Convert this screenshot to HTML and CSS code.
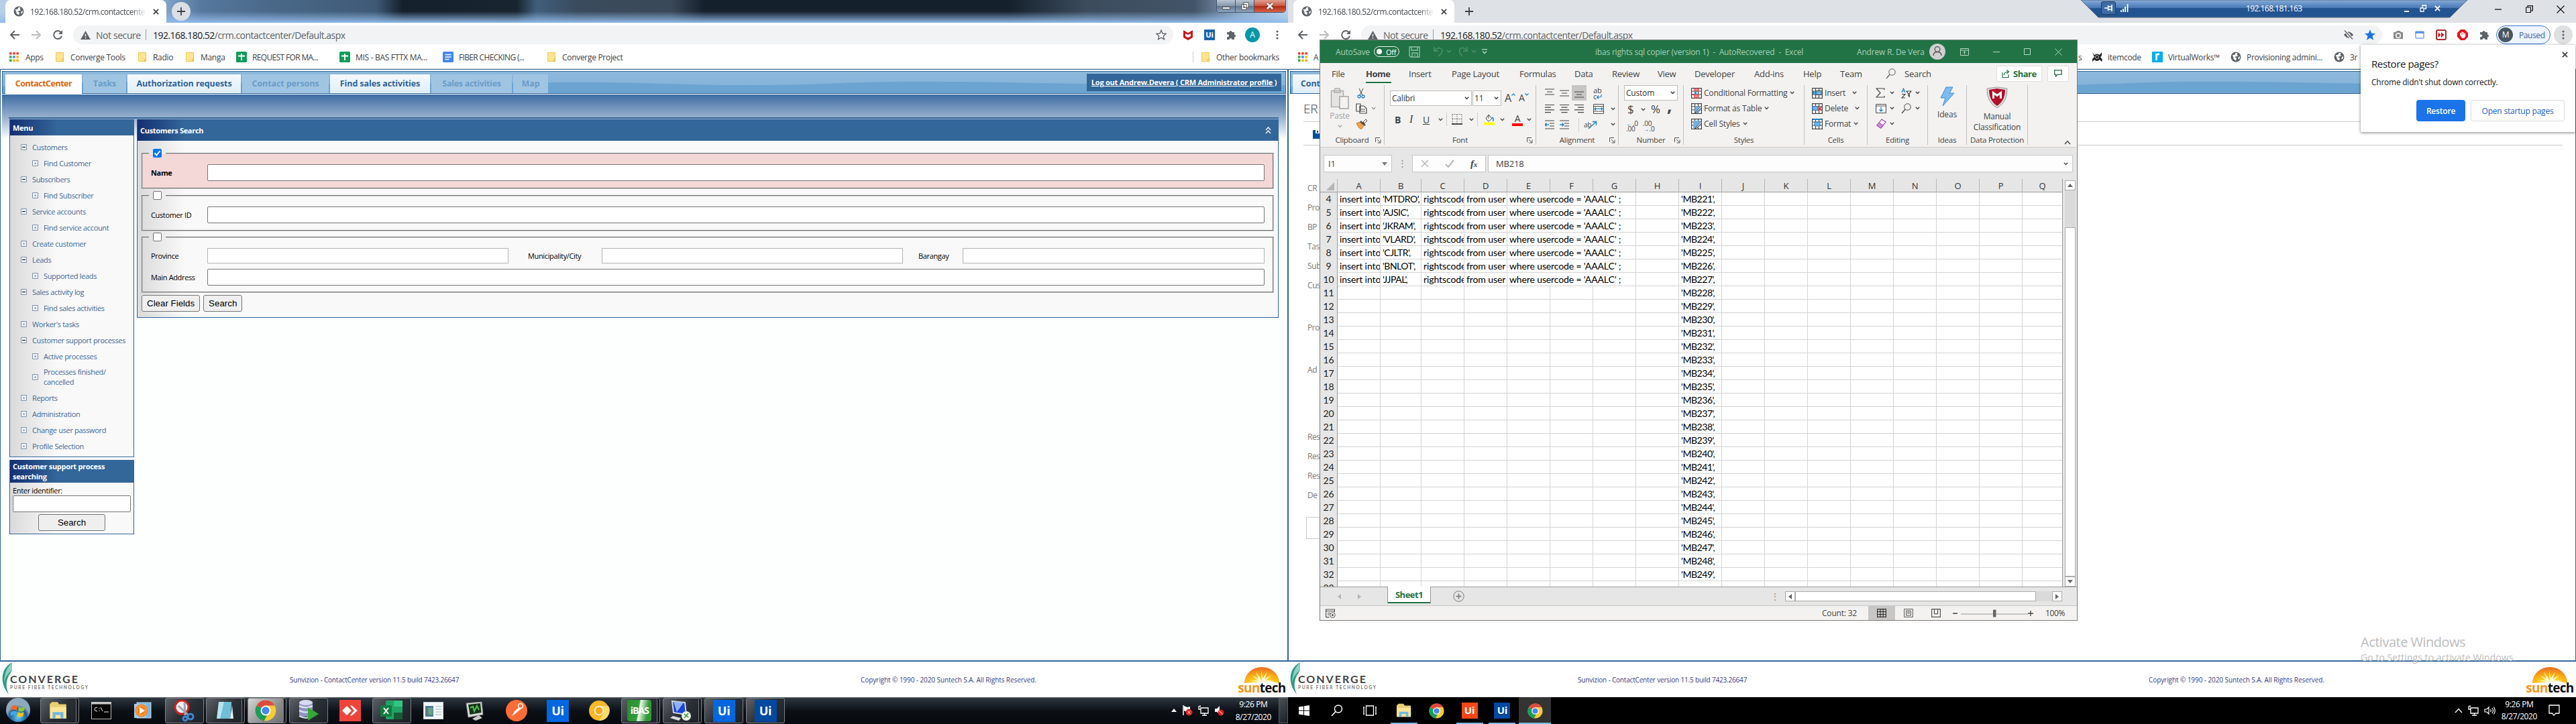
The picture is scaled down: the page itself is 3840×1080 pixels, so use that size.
FILE: index.html
```html
<!DOCTYPE html>
<html lang="en">
<head>
<meta charset="utf-8">
<title>192.168.180.52/crm.contactcenter</title>
<link rel="stylesheet" href="styles.css">
</head>
<body>
<svg width="0" height="0" class="defs">
<symbol id="globe" viewBox="0 0 16 16"><circle cx="8" cy="8" r="7.5" fill="#5f6368"/><path d="M2.5 5.5l4-1 1-2.500 3 0-1 3 2 1-2.500 1-3 1 3 1.500-1 4-3.500-2.500v-2.500zM12 8l2-1-.5 3.500-2.500 1z" fill="#fff"/></symbol>
<symbol id="close" viewBox="0 0 10 10"><path d="M1 1l8 8M9 1l-8 8" stroke="currentColor" stroke-width="2"/></symbol>
<symbol id="plus" viewBox="0 0 12 12"><path d="M6 0v12M0 6h12" stroke="#3c4043" stroke-width="1.800"/></symbol>
<symbol id="back" viewBox="0 0 16 16"><path d="M15 8H2M8 2L2 8l6 6" fill="none" stroke="currentColor" stroke-width="2"/></symbol>
<symbol id="reload" viewBox="0 0 16 16"><path d="M13 4.500A6 6 0 1 0 14 9.500" fill="none" stroke="#5f6368" stroke-width="2"/><path d="M15 1v6H9z" fill="#5f6368"/></symbol>
<symbol id="warn" viewBox="0 0 16 14"><path d="M8 0l8 14H0z" fill="#5f6368"/><path d="M8 5v4M8 10.500v2" stroke="#f1f3f4" stroke-width="1.600"/></symbol>
<symbol id="apps" viewBox="0 0 14 14"><path d="M0 0h3.500v3.500H0zM5.200 0h3.500v3.500H5.200zM10.400 0h3.500v3.500h-3.500z" fill="#ea4335"/><path d="M0 5.200h3.500v3.500H0z" fill="#34a853"/><path d="M5.200 5.200h3.500v3.500H5.200z" fill="#4285f4"/><path d="M10.400 5.200h3.500v3.500h-3.500z" fill="#f4b400"/><path d="M0 10.400h3.500v3.500H0z" fill="#34a853"/><path d="M5.200 10.400h3.500v3.500H5.200zM10.400 10.400h3.500v3.500h-3.500z" fill="#f4b400"/></symbol>
<symbol id="folder" viewBox="0 0 12 14"><path d="M.5.5h11v9l.5 4H.5z" fill="#ffe592" stroke="#f0c752"/><path d="M9.500 13.500v-3l2-1.500v4.500z" fill="#ffe592" stroke="#e8bb35"/></symbol>
<symbol id="sheet" viewBox="0 0 16 16"><rect width="16" height="16" rx="1.500" fill="#0f9d58"/><path d="M8 3v10M3 6.500h10" stroke="#fff" stroke-width="2"/></symbol>
<symbol id="doc" viewBox="0 0 16 16"><rect width="16" height="16" rx="1.500" fill="#4285f4"/><path d="M3.500 4.500h9M3.500 8h9M3.500 11.500h6" stroke="#fff" stroke-width="1.600"/></symbol>
<symbol id="puzzle" viewBox="0 0 16 16"><path d="M2 4h3.500a2 2 0 1 1 4 0H13v3.500a2 2 0 1 1 0 4V15H9.500a2 2 0 1 0-4 0H2v-4a2 2 0 1 0 0-3.500z" fill="#5f6368"/></symbol>
<symbol id="dots" viewBox="0 0 4 16"><circle cx="2" cy="3" r="1.600" fill="#5f6368"/><circle cx="2" cy="8" r="1.600" fill="#5f6368"/><circle cx="2" cy="13" r="1.600" fill="#5f6368"/></symbol>
<symbol id="star" viewBox="0 0 16 16"><path d="M8 1l2 5 5.200.3-4 3.400 1.300 5.100L8 12l-4.500 2.800 1.300-5.100-4-3.400L6 6z" fill="currentColor" stroke="#5f6368" stroke-width="1.300"/></symbol>
<symbol id="node" viewBox="0 0 9 9"><path d="M.5.5h8v8h-8z" fill="#e9eef3" stroke="#7f97b0"/><path d="M4 4h1.200v1.200H4z" fill="#111"/></symbol>
<symbol id="minus" viewBox="0 0 9 9"><path d="M.5.5h8v8h-8z" fill="#e9eef3" stroke="#7f97b0"/><path d="M2 4.500h5" stroke="#111"/></symbol>
<symbol id="chev" viewBox="0 0 7 5"><path d="M.8.8l2.700 2.700L6.200.8" fill="none" stroke="currentColor" stroke-width="1.300"/></symbol>
<symbol id="launch" viewBox="0 0 9 9"><path d="M.5 7V.5H7M3 3l4.500 4.500M8 3.500V8H3.500" fill="none" stroke="#555"/></symbol>
<symbol id="chrome" viewBox="0 0 24 24"><circle cx="12" cy="12" r="11.500" fill="#fbc934"/><path d="M12 12L2 6.200A11.500 11.500 0 0 1 22 6.300H12z" fill="#dd4b3e"/><path d="M12 12L2 6.200a11.500 11.500 0 0 0 8.300 17.200l5-9.400z" fill="#1a9e57"/><circle cx="12" cy="12" r="5.600" fill="#fff"/><circle cx="12" cy="12" r="4.300" fill="#4688f1"/></symbol>
<symbol id="leaf" viewBox="0 0 17 48"><path d="M16 0C0 8 -4 30 11 48 4 32 9 22 16 12z" fill="#2f9b86"/><path d="M16 0C8 8 5 16 4 30 7 20 10 16 16 12z" fill="#8ed0c1"/></symbol>
<symbol id="sun" viewBox="0 0 52 24"><defs><radialGradient id="sg" cx=".5" cy="1" r=".9"><stop offset="0" stop-color="#fff35c"/><stop offset=".5" stop-color="#fdb913"/><stop offset="1" stop-color="#ef7622"/></radialGradient></defs><path d="M0 24A26 24 0 0 1 52 24L38 21 28 22z" fill="url(#sg)"/><path d="M26 22L25 5l2.500 12L34 7l-4 11 10-6-8 8 12 0-18 3-18-3h12L11 12l10 6-4-11 6.500 10z" fill="#fffbd0"/></symbol>
<symbol id="net" viewBox="0 0 16 16"><path d="M4 4h11v8H4zM9.500 12v3M6 15h7M1 1v5h3M3 0v3" fill="none" stroke="#fff" stroke-width="1.300"/></symbol>
<symbol id="fold" viewBox="0 0 30 30"><path d="M3 6l3-3h8l2 3h10v20H3z" fill="#e9cf73"/><path d="M4 10h22v16H4z" fill="#fbe597"/><path d="M7 26v-9h15v9h-4v-5h-7v5z" fill="#6fb8e0"/></symbol>
<symbol id="al" viewBox="0 0 14 14"><path d="M0 1.500h14M0 5.200h9M0 8.900h14M0 12.600h9" stroke="#444" stroke-width="1.200"/></symbol>
<symbol id="ac" viewBox="0 0 14 14"><path d="M0 1.500h14M2.500 5.200h9M0 8.900h14M2.500 12.600h9" stroke="#444" stroke-width="1.200"/></symbol>
<symbol id="tbl" viewBox="0 0 16 16"><path d="M.6.6h14.800v14.800H.600zM.6 5h14.800M.6 10h14.800M5.500.6v14.800M10.500.6v14.800" fill="#fff" stroke="#444" stroke-width="1.200"/></symbol>
</svg>

<main class="desktop">
<!-- left monitor -->
<section class="screen">
  <header class="strip aero">
    <div class="tab t1"><svg class="i16"><use href="#globe"/></svg><span class="fade">192.168.180.52/crm.contactcente</span><svg class="i10"><use href="#close"/></svg></div>
    <div class="newtab"><svg width="12" height="12"><use href="#plus"/></svg></div>
    <div class="caption"><i><svg width="14" height="14"><rect x="1.500" y="8.500" width="11" height="3" fill="#fff" stroke="#555"/></svg></i><i><svg width="14" height="14"><path d="M5 1.500h7v8H5zM2 4.500h7v8H2zM5 7.500h1v2H5z" fill="#fff" stroke="#555"/></svg></i><i class="red"><svg width="12" height="12"><path d="M2 2l8 8M10 2l-8 8" stroke="#533" stroke-width="4.200"/><path d="M2 2l8 8M10 2l-8 8" stroke="#fff" stroke-width="2.600"/></svg></i></div>
  </header>
  <nav class="tools">
    <svg class="i16 g5"><use href="#back"/></svg><svg class="i16 g1 flip"><use href="#back"/></svg><svg class="i16"><use href="#reload"/></svg>
    <div class="pill p1"><svg width="15" height="13"><use href="#warn"/></svg><span class="ns">Not secure</span><b></b><span class="url"><em>192.168.180.52</em>/crm.contactcenter/Default.aspx</span><svg class="i16 st"><use href="#star"/></svg></div>
    <div class="ext e1">
      <svg width="16" height="18"><path d="M1 2l7 4 7-4v11l-7 4-7-4z" fill="#c8161d"/><path d="M4 7v4l4 2 4-2V7l-4 2z" fill="#fff"/></svg>
      <span class="ui">Ui</span><svg class="i16"><use href="#puzzle"/></svg><span class="ava teal">A</span><svg width="4" height="16"><use href="#dots"/></svg>
    </div>
  </nav>
  <nav class="marks m1">
    <svg width="14" height="14"><use href="#apps"/></svg><span>Apps</span>
    <svg width="12" height="14"><use href="#folder"/></svg><span>Converge Tools</span>
    <svg width="12" height="14"><use href="#folder"/></svg><span>Radio</span>
    <svg width="12" height="14"><use href="#folder"/></svg><span>Manga</span>
    <svg class="i16"><use href="#sheet"/></svg><span class="tight">REQUEST FOR MA...</span>
    <svg class="i16"><use href="#sheet"/></svg><span>MIS - BAS FTTX MA...</span>
    <svg class="i16"><use href="#doc"/></svg><span class="tight">FIBER CHECKING (...</span>
    <svg width="12" height="14"><use href="#folder"/></svg><span>Converge Project</span>
    <u></u><svg width="12" height="14"><use href="#folder"/></svg><span>Other bookmarks</span>
  </nav>
  <div class="page crm">
    <div class="bar">
      <ul class="tabs"><li class="cur">ContactCenter</li><li>Tasks</li><li class="on">Authorization requests</li><li>Contact persons</li><li class="on">Find sales activities</li><li>Sales activities</li><li>Map</li></ul>
      <svg class="wave" viewBox="0 0 1910 32" preserveAspectRatio="none"><path d="M0 22C120 14 240 14 380 17S800 15 900 16 1080 24 1250 17 1600 22 1910 20V32H0z" fill="#6ba3d1"/></svg>
      <a class="logout">Log out Andrew.Devera ( CRM Administrator profile )</a>
    </div>
    <div class="content">
      <aside>
        <section class="box menu"><h2>Menu</h2>
          <ul>
            <li><svg><use href="#minus"/></svg>Customers</li><li class="s"><svg><use href="#node"/></svg>Find Customer</li>
            <li><svg><use href="#minus"/></svg>Subscribers</li><li class="s"><svg><use href="#node"/></svg>Find Subscriber</li>
            <li><svg><use href="#minus"/></svg>Service accounts</li><li class="s"><svg><use href="#node"/></svg>Find service account</li>
            <li><svg><use href="#node"/></svg>Create customer</li>
            <li><svg><use href="#minus"/></svg>Leads</li><li class="s"><svg><use href="#node"/></svg>Supported leads</li>
            <li><svg><use href="#minus"/></svg>Sales activity log</li><li class="s"><svg><use href="#node"/></svg>Find sales activities</li>
            <li><svg><use href="#node"/></svg>Worker's tasks</li>
            <li><svg><use href="#minus"/></svg>Customer support processes</li><li class="s"><svg><use href="#node"/></svg>Active processes</li>
            <li class="s two"><svg><use href="#node"/></svg>Processes finished/<br>cancelled</li>
            <li><svg><use href="#node"/></svg>Reports</li><li><svg><use href="#node"/></svg>Administration</li><li><svg><use href="#node"/></svg>Change user password</li><li><svg><use href="#node"/></svg>Profile Selection</li>
          </ul></section>
        <section class="box find"><h2>Customer support process searching</h2><label>Enter identifier:</label><div class="inp"></div><button>Search</button></section>
      </aside>
      <section class="box search"><h2>Customers Search<svg width="9" height="11"><path d="M1 5l3.500-4L8 5M1 10l3.500-4L8 10" fill="none" stroke="#fff" stroke-width="1.300"/></svg></h2>
        <fieldset class="pink"><legend><i class="chk on"><svg width="13" height="13"><path d="M2.500 6.500l3 3 5-6.500" fill="none" stroke="#fff" stroke-width="2"/></svg></i></legend><div class="f1"><b>Name</b><div class="inp"></div></div></fieldset>
        <fieldset><legend><i class="chk"></i></legend><div class="f1"><span>Customer ID</span><div class="inp"></div></div></fieldset>
        <fieldset class="addr"><legend><i class="chk"></i></legend><div class="f3"><span>Province</span><div class="inp l"></div><span>Municipality/City</span><div class="inp l"></div><span>Barangay</span><div class="inp l"></div></div><div class="f1"><span>Main Address</span><div class="inp"></div></div></fieldset>
        <div class="btns"><button>Clear Fields</button><button>Search</button></div>
      </section>
    </div>
  </div>
  <footer class="foot"><svg width="17" height="48"><use href="#leaf"/></svg><div class="conv"><strong>CONVERGE</strong><small>PURE FIBER TECHNOLOGY</small></div><p class="v">Sunvizion - ContactCenter version 11.5 build 7423.26647</p><p class="c">Copyright © 1990 - 2020 Suntech S.A. All Rights Reserved.</p><div class="sunt"><svg width="52" height="24"><use href="#sun"/></svg><span><em>sun</em>tech</span></div></footer>
  <div class="task seven">
    <div class="cell"><svg width="40" height="40"><defs><radialGradient id="orb" cy=".8"><stop offset="0" stop-color="#5fd0f5"/><stop offset=".7" stop-color="#20588f"/><stop offset="1" stop-color="#8fa9bd"/></radialGradient></defs><circle cx="20" cy="19" r="18" fill="url(#orb)"/><path d="M10 14q5-4 9 0l-1 6q-5-3-9 0z" fill="#f0682a"/><path d="M21 14q4 3 9 0l-1 6q-5 3-9 0z" fill="#8cc63f"/><path d="M9 22q5-3 9 0l-1 6q-5-3-9 0z" fill="#3fa9e8"/><path d="M19.500 22q4 3 9 0l-1 6q-5 3-9 0z" fill="#fcc419"/></svg></div>
    <div class="cell bx st2"><svg width="32" height="32" viewBox="0 0 30 30"><use href="#fold"/></svg></div>
    <div class="cell"><svg width="30" height="26"><rect x=".5" y=".5" width="29" height="25" fill="#050505" stroke="#b8b8b8"/><path d="M0 2h30" stroke="#ccc" stroke-width="3"/><path d="M9 8q-4 0-4 3t4 3M12 9v1M12 13v1M14 8l3 6M19 15h7" stroke="#eee" fill="none"/></svg></div>
    <div class="cell"><svg width="28" height="28"><rect x="5" y="2" width="21" height="23" fill="#7fb8de" stroke="#b8d8ee"/><rect x="1" y="4" width="18" height="21" fill="#a3cbe6"/><circle cx="12" cy="14" r="9.500" fill="#f58220"/><circle cx="12" cy="14" r="7" fill="none" stroke="#fbb574"/><path d="M9 9l8 5-8 5z" fill="#fff"/></svg></div>
    <div class="cell bx"><svg width="34" height="34"><circle cx="13" cy="12" r="10" fill="#eef2f6" stroke="#c22" stroke-width="3"/><path d="M8 10l15 14M17 5L18 24" stroke="#9aa4ae" stroke-width="3"/><circle cx="26" cy="26" r="4" fill="none" stroke="#3f86cf" stroke-width="3"/><circle cx="18" cy="29" r="3" fill="none" stroke="#3f86cf" stroke-width="3"/></svg></div>
    <div class="cell bx st2"><svg width="32" height="32"><path d="M8 3h19l-2 25H5z" fill="#b9e3ef"/><path d="M16 3h11l-2 25H10z" fill="#6fbfd8"/><path d="M25 28l3-20 2 20z" fill="#dfeff5"/></svg></div>
    <div class="cell bx st2 act"><svg width="32" height="32" viewBox="0 0 24 24"><use href="#chrome"/></svg></div>
    <div class="cell bx"><svg width="34" height="34"><path d="M3 4v22h20V4z" fill="#8f93c4"/><ellipse cx="13" cy="5" rx="10" ry="4" fill="#d7d9ee"/><path d="M3 10q10 5 20 0M3 17q10 5 20 0M3 25q10 6 20 0" fill="none" stroke="#e6e7f5" stroke-width="2"/><path d="M16 12l16 10-16 10z" fill="#35a836"/></svg></div>
    <div class="cell"><svg width="32" height="32"><rect width="32" height="32" fill="#ef443b"/><path d="M4 16l7-7 7 7-7 7zM16 9l2-1 9 8-9 8-2-1 6-7z" fill="#fff"/></svg></div>
    <div class="cell bx"><svg width="34" height="32"><rect x="8" y="1" width="25" height="28" rx="2" fill="#21a366"/><path d="M20 1h13v9H20z" fill="#33c481"/><path d="M20 19h13v8q0 2-2 2H20z" fill="#185c37"/><rect y="8" width="17" height="17" rx="1" fill="#107c41"/><path d="M5 12l7 9M12 12l-7 9" stroke="#fff" stroke-width="2"/></svg></div>
    <div class="cell"><svg width="30" height="26"><rect x=".5" y=".5" width="29" height="25" fill="#f3f6f8" stroke="#c7d3da"/><path d="M3 6h12v16H3z" fill="#4c7c90"/><path d="M18 7h9M18 11h9M18 15h9M18 19h9" stroke="#9db6c1"/><path d="M7 9h7v10H7z" fill="#6e9f87"/></svg></div>
    <div class="cell"><svg width="32" height="32"><path d="M3 5l23-2 2 19-22 4z" fill="#d9dcd8" stroke="#888"/><path d="M6 7l18-2 1.500 14-17 3z" fill="#16331a"/><path d="M9 12l4-2 2 7 4-8 3 6" fill="none" stroke="#4fc04f" stroke-width="2"/><path d="M12 28l10-5 5 4-10 4z" fill="#c8cbc8"/></svg></div>
    <div class="cell"><svg width="34" height="34"><circle cx="17" cy="17" r="16" fill="#ff6c37"/><path d="M10 25l4-7 9-8 2 3-9 8z" fill="#fff"/><circle cx="23" cy="10" r="3.500" fill="#ff6c37" stroke="#fff" stroke-width="1.500"/></svg></div>
    <div class="cell"><span class="uib">Ui</span></div>
    <div class="cell"><svg width="32" height="32"><circle cx="16" cy="16" r="15" fill="#fbb829"/><path d="M16 9h14a15 15 0 0 1-14 22l7-11z" fill="#fddc6a"/><circle cx="16" cy="16" r="7" fill="#fff"/><circle cx="16" cy="16" r="5.500" fill="#f5a81c"/></svg></div>
    <div class="cell bx st2"><span class="ibas">iBAS</span></div>
    <div class="cell bx st2"><svg width="34" height="34"><path d="M4 3l19 2 2 18-19-3z" fill="#1b44d8" stroke="#cfd6e2" stroke-width="2"/><path d="M6 4l15 1-10 14z" fill="#8fb2f5"/><path d="M5 25l12 3-3 4-13-4z" fill="#d8dce0"/><circle cx="25" cy="25" r="7" fill="#e9f1e9"/><path d="M22 22l3 3-3 3M28 21l-3 3 3 3" stroke="#3b9a3b" stroke-width="1.600" fill="none"/></svg></div>
    <div class="cell bx"><span class="uib">Ui</span></div>
    <div class="cell bx"><span class="uib dk">Ui</span></div>
    <div class="tray"><svg width="8" height="6"><path d="M0 5l4-5 4 5z" fill="#fff"/></svg><svg width="16" height="16"><path d="M2 0v15" stroke="#fff" stroke-width="1.500"/><path d="M3 1l5 2 4-1v7l-5 1-4-2z" fill="#fff"/><circle cx="10.500" cy="10.500" r="5" fill="#d22"/><path d="M8.500 8.500l4 4M12.500 8.500l-4 4" stroke="#fff"/></svg><svg class="i16"><use href="#net"/></svg><svg width="16" height="16"><path d="M1 5h3l4-4v13l-4-4H1z" fill="#eee"/><circle cx="10" cy="11" r="4.500" fill="#d22"/><path d="M7.500 8.500l5 5" stroke="#fff"/></svg><div class="clock">9:26 PM<br>8/27/2020</div><i class="peek"></i></div>
  </div>
</section>

<!-- right monitor -->
<section class="screen">
  <header class="strip grey">
    <div class="tab t2"><svg class="i16"><use href="#globe"/></svg><span class="fade">192.168.180.52/crm.contactcente</span><svg class="i10"><use href="#close"/></svg></div>
    <div class="newtab bare"><svg width="12" height="12"><use href="#plus"/></svg></div>
    <div class="wc"><svg width="11" height="12"><path d="M0 6h10" stroke="#111" stroke-width="1.300"/></svg><svg width="11" height="11"><path d="M.5 3h7v7.500h-7zM3 3V.6h7.400V8H7.500" fill="none" stroke="#111" stroke-width="1.200"/></svg><svg width="12" height="12"><path d="M.5.5l11 11M11.500.5l-11 11" stroke="#111" stroke-width="1.200"/></svg></div>
  </header>
  <nav class="tools r">
    <svg class="i16 g5"><use href="#back"/></svg><svg class="i16 g1 flip"><use href="#back"/></svg><svg class="i16"><use href="#reload"/></svg>
    <div class="pill p2"><svg width="15" height="13"><use href="#warn"/></svg><span class="ns">Not secure</span><b></b><span class="url"><em>192.168.180.52</em>/crm.contactcenter/Default.aspx</span><svg class="i16 eye"><path d="M1 8q7-9 14 0-7 9-14 0z" fill="#5f6368"/><circle cx="8" cy="8" r="2.500" fill="#fff"/><path d="M2 1.500l12 13" stroke="#fff" stroke-width="3.500"/><path d="M2 1.500l12 13" stroke="#5f6368" stroke-width="1.600"/></svg><svg class="i16 blue"><path d="M8 0l2.300 5.700 5.700.3-4.500 3.800L13 16l-5-3.400L3 16l1.500-6.200L0 6l5.700-.3z" fill="#1a73e8"/></svg></div>
    <div class="ext e2">
      <svg class="i16"><path d="M1 4h3l2-2h5l1 2h3v10H1z" fill="#8b8b8b"/><circle cx="8" cy="9" r="3.300" fill="#8b8b8b" stroke="#fff" stroke-width="1.500"/></svg>
      <svg class="i16"><rect x="2" y="3" width="12" height="10" rx="1" fill="#fff" stroke="#7aa5ea" stroke-width="1.500"/><path d="M1.500 4.500h13" stroke="#4f8dee" stroke-width="2.500"/></svg>
      <svg class="i16"><rect x="1" y="1" width="14" height="14" rx="2" fill="#fff" stroke="#a52a2a" stroke-width="2"/><path d="M3.500 4l4 4-4 4zM8 4l4.500 4L8 12z" fill="#c01818"/></svg>
      <svg class="i16"><path d="M5 0h6l5 5v6l-5 5H5l-5-5V5z" fill="#e8121c"/><path d="M5 9V5M7.200 8V3.500M9.300 8V4M11.300 9V5.500" stroke="#fff" stroke-width="1.600"/><path d="M4.200 8h8v2l-2 3H7z" fill="#fff"/></svg>
      <svg class="i16"><use href="#puzzle"/></svg>
      <span class="paused"><span class="ava">M</span>Paused</span><span class="mdots"><svg width="4" height="16"><use href="#dots"/></svg></span>
    </div>
  </nav>
  <nav class="marks m2">
    <svg width="14" height="14"><use href="#apps"/></svg><span class="cut">A</span><span>s</span>
    <svg class="i16"><path d="M1 1l3 4q4-3 8 0l3-4v5l-2 2 3 4-1 3-3-3q-4 4-8 0l-3 3v-4l3-3z" fill="#222"/><circle cx="8" cy="8" r="2.500" fill="#222" stroke="#bbb"/></svg><span>itemcode</span>
    <svg class="i16"><rect width="16" height="16" fill="#00aeef"/><path d="M6.500 13V3M6.500 5.500Q8 3.500 11 4" fill="none" stroke="#fff" stroke-width="2.800"/></svg><span>VirtualWorks™</span>
    <svg class="i16"><use href="#globe"/></svg><span>Provisioning admini...</span>
    <svg class="i16"><use href="#globe"/></svg><span>3r</span>
  </nav>
  <div class="page erp">
    <div class="bar"><ul class="tabs"><li class="on">Cont</li></ul><svg class="wave" viewBox="0 0 1910 32" preserveAspectRatio="none"><path d="M0 22C120 14 240 14 380 17S800 15 900 16 1080 24 1250 17 1600 22 1910 20V32H0z" fill="#6ba3d1"/></svg></div>
    <div class="head"><h1>ER</h1></div>
    <div class="save"><svg width="16" height="13"><path d="M0 0h16v13H0z" fill="#00509e"/><path d="M4 0h8v5H4z" fill="#fff"/><path d="M6 1h2v3H6z" fill="#00509e"/></svg></div>
    <ul class="labels"><li>CR</li><li>Pro</li><li>BP</li><li>Tas</li><li>Sub</li><li>Cus</li><li class="w">Pro</li><li class="w">Ad</li><li class="x">Res</li><li>Res</li><li>Res</li><li>De</li></ul>
    <div class="note"></div>
  </div>
  <footer class="foot"><svg width="17" height="48"><use href="#leaf"/></svg><div class="conv"><strong>CONVERGE</strong><small>PURE FIBER TECHNOLOGY</small></div><p class="v">Sunvizion - ContactCenter version 11.5 build 7423.26647</p><p class="c">Copyright © 1990 - 2020 Suntech S.A. All Rights Reserved.</p><div class="sunt"><svg width="52" height="24"><use href="#sun"/></svg><span><em>sun</em>tech</span></div></footer>
  <div class="task ten">
    <div class="tc"><svg width="16" height="16"><path d="M0 2.500l7-1v6H0zM8 1.300l8-1.300v7.500H8zM0 8.500h7v6l-7-1zM8 8.500h8V16l-8-1.300z" fill="#fff"/></svg></div>
    <div class="tc"><svg width="18" height="18"><circle cx="11" cy="6.500" r="5.500" fill="none" stroke="#fff" stroke-width="1.400"/><path d="M7 10.500L1 17" stroke="#fff" stroke-width="1.600"/></svg></div>
    <div class="tc gap"><svg width="20" height="16"><path d="M4.500 1h11v14h-11zM0 3h2M1 3v10M0 13h2M20 3h-2M19 3v10M20 13h-2" fill="none" stroke="#fff" stroke-width="1.300"/></svg></div>
    <div class="tc run"><svg width="24" height="22" viewBox="2 2 26 26" preserveAspectRatio="none"><use href="#fold" width="30" height="30"/></svg></div>
    <div class="tc"><svg width="23" height="23" viewBox="0 0 24 24"><use href="#chrome"/></svg></div>
    <div class="tc run"><span class="uis or">Ui</span></div>
    <div class="tc run"><span class="uis">Ui</span></div>
    <div class="tc run full"><svg width="23" height="23" viewBox="0 0 24 24"><use href="#chrome"/></svg></div>
    <div class="tray2"><svg width="12" height="8"><path d="M1 7l5-5.500L11 7" fill="none" stroke="#fff" stroke-width="1.300"/></svg><svg class="i16"><use href="#net"/></svg><svg width="17" height="14"><path d="M1 5h3l3-3v10L4 9H1zM9.500 5q1.500 2 0 4M12 3q3 4 0 8M14.300 1.500q4 5.500 0 11" fill="none" stroke="#fff" stroke-width="1.200"/></svg><div class="clock">9:26 PM<br>8/27/2020</div><svg width="17" height="18"><path d="M1 1h15v12h-5l-3 3-2.500-3H1z" fill="none" stroke="#fff" stroke-width="1.300"/></svg></div>
  </div>

  <!-- remote desktop connection bar -->
  <div class="rdp"><svg class="rbg" width="576" height="27"><defs><linearGradient id="rb" x2="0" y2="1"><stop offset="0" stop-color="#86acd9"/><stop offset=".45" stop-color="#4878b5"/><stop offset=".46" stop-color="#235492"/><stop offset="1" stop-color="#235492"/></linearGradient></defs><path d="M0 0l26 26h524l26-26z" fill="url(#rb)" stroke="#5a6a80"/></svg>
    <i class="pin"><svg width="12" height="10"><path d="M0 5h5M5.500 1v8M6 3h5v4H6M11 0v10" stroke="#fff" stroke-width="1.600" fill="none"/></svg></i><svg width="12" height="12"><path d="M1 12V9M4 12V7M7 12V4M10.500 12V0" stroke="#fff" stroke-width="1.800"/></svg><span>192.168.181.163</span><svg width="9" height="12"><path d="M1 11h7" stroke="#fff" stroke-width="2"/></svg><svg width="11" height="11"><path d="M1 5h5v5H1zM4 4V1h5.500v5H7" fill="none" stroke="#fff" stroke-width="1.300"/></svg><svg class="wh" width="9" height="9"><use href="#close"/></svg></div>

  <!-- restore pages bubble -->
  <div class="bubble"><div class="bh"><span>Restore pages?</span><svg class="i10"><use href="#close"/></svg></div><p>Chrome didn't shut down correctly.</p><div class="bb"><button class="pri">Restore</button><button>Open startup pages</button></div></div>
  <div class="mark"><span>Activate Windows</span><small>Go to Settings to activate Windows.</small></div>

  <!-- Excel window -->
  <div class="excel">
    <div class="xt">
      <span>AutoSave</span><i class="tog"><b></b>Off</i>
      <svg width="17" height="17"><path d="M1 1h15v15H3l-2-2zM4 1v5h9V1M5 16v-6h8v6M9 12v2" fill="none" stroke="#8fc3a5" stroke-width="1.300"/></svg>
      <svg width="28" height="16"><path d="M1 1v6h6M1 7q6-7 11-3 3 5-5 11M20 6l3 3 3-3" fill="none" stroke="#4f936b" stroke-width="1.400"/></svg>
      <svg width="28" height="16"><path d="M13 1v6H7M13 7Q7 0 2 4q-2 5 4 11M20 6l3 3 3-3" fill="none" stroke="#4f936b" stroke-width="1.400"/></svg>
      <svg width="8" height="8"><path d="M0 .7h8M1 3.500l3 3 3-3" fill="none" stroke="#b6d8c3" stroke-width="1.300"/></svg>
      <span>ibas rights sql copier (version 1) &nbsp;- &nbsp;AutoRecovered &nbsp;- &nbsp;Excel</span><span>Andrew R. De Vera</span>
      <svg width="24" height="24"><circle cx="12" cy="12" r="12" fill="#d0d0d0"/><circle cx="12" cy="8.500" r="3.800" fill="none" stroke="#555" stroke-width="1.300"/><path d="M6 18q0-5.500 6-5.500t6 5.500" fill="none" stroke="#555" stroke-width="1.300"/></svg>
      <svg width="13" height="11"><path d="M.5.5h12v10H.5zM.5 3h12M6.500 9V5M4.500 6.500l2-2 2 2" fill="none" stroke="#b6d8c3"/></svg><svg width="11" height="10"><path d="M0 5.500h10" stroke="#b6d8c3"/></svg><svg width="11" height="11"><path d="M.5.5h9v9h-9z" fill="none" stroke="#b6d8c3"/></svg><svg width="11" height="11"><path d="M.5.5l10 10M10.500.5l-10 10" stroke="#b6d8c3"/></svg>
    </div>
    <div class="xm"><span>File</span><span class="home">Home</span><span>Insert</span><span>Page Layout</span><span>Formulas</span><span>Data</span><span>Review</span><span>View</span><span>Developer</span><span>Add-ins</span><span>Help</span><span>Team</span><svg width="16" height="16"><circle cx="9.500" cy="5.500" r="4.700" fill="none" stroke="#555"/><path d="M6 9l-5 6" stroke="#555" stroke-width="1.200"/></svg><span>Search</span><span class="share"><svg width="12" height="12"><path d="M1 4v7.500h9V7M3 8q1-5 7-5M7.500.5L10.500 3l-3 3" fill="none" stroke="#217346" stroke-width="1.200"/></svg>Share</span><span class="cmt"><svg width="12" height="11"><path d="M.7.700h10.500v6.500H5l-2.500 3v-3H.7z" fill="none" stroke="#217346" stroke-width="1.300"/></svg></span></div>
    <div class="ribbon">
      <div class="g" style="width:96px"><div class="gb clip">
        <div class="paste"><svg width="28" height="32"><path d="M1.500 4.500h18v24h-18zM6 4l1-3h7l1 3v3H6z" fill="#e6e4e2" stroke="#b0aeac" stroke-width="1.500"/><rect x="14" y="13" width="13" height="18" fill="#f3f2f1" stroke="#999" stroke-width="1.300"/></svg><span>Paste</span><svg class="cv"><use href="#chev"/></svg></div>
        <div class="col3"><svg width="12" height="16"><path d="M3 1l5 10M9 1L4 11" stroke="#444"/><circle cx="3" cy="13" r="2" fill="none" stroke="#1e7fc2" stroke-width="1.300"/><circle cx="9" cy="13" r="2" fill="none" stroke="#1e7fc2" stroke-width="1.300"/></svg><svg width="30" height="16"><path d="M1 1h6v11H1zM6 4h6l4 4v7H6z" fill="#fff" stroke="#444" stroke-width="1.200"/><path d="M24 6l2.700 2.700L29.400 6M8 9h6M8 12h6" fill="none" stroke="#444"/></svg><svg width="18" height="16"><path d="M11 5l4-4 2 2-4 4z" fill="#fff" stroke="#444"/><path d="M1 7l5-2 6 6-4 5q-4-2-7-9z" fill="#f0a050" stroke="#d9731a"/><path d="M7 4l7 6" stroke="#444" stroke-width="2.500"/></svg></div></div><div class="gl">Clipboard<svg class="la"><use href="#launch"/></svg></div></div>
      <div class="g" style="width:226px"><div class="gb font">
        <div class="fr1"><span class="combo" style="width:122px">Calibri<svg class="cv"><use href="#chev"/></svg></span><span class="combo" style="width:43px">11<svg class="cv"><use href="#chev"/></svg></span><span class="big">A<svg width="6" height="4"><path d="M.5 3.500L3 1l2.500 2.500" fill="none" stroke="#1e7fc2" stroke-width="1.200"/></svg></span><span class="big sm">A<svg width="6" height="4"><path d="M.5.5L3 3 5.500.5" fill="none" stroke="#1e7fc2" stroke-width="1.200"/></svg></span></div>
        <div class="fr2"><b>B</b><em>I</em><u>U</u><svg class="cv"><use href="#chev"/></svg><s></s><svg width="16" height="16"><path d="M1 .5h14M1 7.500h14M1 1v14M8 1v14M15 1v14" stroke="#444" stroke-dasharray="1 1.500" fill="none"/><path d="M0 15h16" stroke="#111" stroke-width="1.500"/></svg><svg class="cv"><use href="#chev"/></svg><s></s><svg width="16" height="18"><path d="M7 2l5 6-5 4-4-4zM7 2v6" fill="#fff" stroke="#444"/><path d="M12 6q3 1 1.500 6" stroke="#1e7fc2" stroke-width="1.500" fill="none"/><path d="M0 15.500h16" stroke="#ffff00" stroke-width="4"/></svg><svg class="cv"><use href="#chev"/></svg><span class="fa">A</span><svg class="cv"><use href="#chev"/></svg></div></div><div class="gl">Font<svg class="la"><use href="#launch"/></svg></div></div>
      <div class="g" style="width:123px"><div class="gb align">
        <svg class="i14"><path d="M0 1h14M3 5h8M0 9h14" stroke="#444" stroke-width="1.200"/></svg><svg class="i14"><path d="M0 3h14M3 7h8M0 11h14" stroke="#444" stroke-width="1.200"/></svg><span class="sel"><svg class="i14"><path d="M0 5h14M3 9h8M0 13h14" stroke="#444" stroke-width="1.200"/></svg></span><span class="ab">ab<br>c<svg width="8" height="7"><path d="M7 0v3q0 1-6 1M3 1.500L.7 4 3 6.500" stroke="#1e7fc2" fill="none" stroke-width="1.200"/></svg></span><i></i>
        <svg class="i14"><use href="#al"/></svg><svg class="i14"><use href="#ac"/></svg><svg class="i14 flip"><use href="#al"/></svg><svg width="16" height="15"><path d="M.6.6h14.800v13.800H.600zM.6 3.500h14.800M.6 11h14.800" fill="#fff" stroke="#444"/><path d="M2 7.300h12M4 5L2 7.300l2 2.300M12 5l2 2.300-2 2.300" fill="none" stroke="#1e7fc2" stroke-width="1.300"/></svg><svg class="cv"><use href="#chev"/></svg>
        <svg class="i14"><path d="M0 1h14M7 5h7M7 9h7M0 13h14" stroke="#444" stroke-width="1.200"/><path d="M6 7H0M2.500 4.500L0 7l2.500 2.500" stroke="#1e7fc2" fill="none" stroke-width="1.300"/></svg><svg class="i14"><path d="M0 1h14M7 5h7M7 9h7M0 13h14" stroke="#444" stroke-width="1.200"/><path d="M0 7h6M3.500 4.500L6 7 3.500 9.500" stroke="#1e7fc2" fill="none" stroke-width="1.300"/></svg><s></s><span class="ori">ab<svg width="14" height="14"><path d="M1 13L12 3M7 2.500h5.500V8" fill="none" stroke="#1e7fc2" stroke-width="1.300"/></svg></span><svg class="cv"><use href="#chev"/></svg></div><div class="gl">Alignment<svg class="la"><use href="#launch"/></svg></div></div>
      <div class="g" style="width:97px"><div class="gb num"><span class="combo" style="width:80px">Custom<svg class="cv"><use href="#chev"/></svg></span><div class="n2"><span>$</span><svg class="cv"><use href="#chev"/></svg><span>%</span><strong>,</strong></div><div class="n3"><span><i>←</i>.0<br>.00</span><span>.00<br><i>→</i>.0</span></div></div><div class="gl">Number<svg class="la"><use href="#launch"/></svg></div></div>
      <div class="g" style="width:180px"><div class="gb list"><div><svg class="i16"><use href="#tbl"/><path d="M5 1h6v4H5zM1 10h10v5H5v-5z" fill="#f78b8b" stroke="#d33"/><path d="M5 5h3v5H5z" fill="#3d8fd6"/></svg>Conditional Formatting<svg class="cv"><use href="#chev"/></svg></div><div><svg class="i16"><use href="#tbl"/><path d="M5.500 5H15v5l-5 5H5.500z" fill="#6fb2e8"/><path d="M15 4l-8 9-2 2 3-1 8-8z" fill="#fff" stroke="#444"/></svg>Format as Table<svg class="cv"><use href="#chev"/></svg></div><div><svg class="i16"><use href="#tbl"/><path d="M3 3h11v7l-4 4H3z" fill="#6fb2e8"/><path d="M15 4l-8 9-2 2 3-1 8-8z" fill="#fff" stroke="#444"/></svg>Cell Styles<svg class="cv"><use href="#chev"/></svg></div></div><div class="gl">Styles</div></div>
      <div class="g" style="width:94px"><div class="gb list"><div><svg class="i16"><use href="#tbl"/><path d="M6 4.500h9v6H6z" fill="#6fb2e8" stroke="#444"/><path d="M7 7.500H1M3.500 5L1 7.500 3.500 10" stroke="#1e7fc2" stroke-width="1.500" fill="none"/></svg>Insert<svg class="cv sp"><use href="#chev"/></svg></div><div><svg class="i16"><use href="#tbl"/><path d="M1 4.500h8v6H1z" fill="#6fb2e8" stroke="#1e7fc2"/><path d="M9 5l6 6M15 5l-6 6" stroke="#e33" stroke-width="1.600"/></svg>Delete<svg class="cv sp"><use href="#chev"/></svg></div><div><svg class="i16"><use href="#tbl"/><path d="M4 5h8v6H4z" fill="#6fb2e8" stroke="#1e7fc2"/><path d="M1 1h14" stroke="#1e7fc2" stroke-width="2"/></svg>Format<svg class="cv"><use href="#chev"/></svg></div></div><div class="gl">Cells</div></div>
      <div class="g" style="width:90px"><div class="gb edit">
        <svg width="14" height="15"><path d="M13 3V1H1l6 6.500L1 14h12v-2" fill="none" stroke="#444" stroke-width="1.200"/></svg><svg class="cv"><use href="#chev"/></svg><svg class="i16"><path d="M1 7l2.500-6L6 7M2 5h3" fill="none" stroke="#1e7fc2" stroke-width="1.200"/><path d="M1 9.500h5l-5 5.500h5M8 5h7l-2.700 3.500V13l-1.600-1.500v-3z" fill="none" stroke="#444" stroke-width="1.200"/></svg><svg class="cv"><use href="#chev"/></svg>
        <svg width="16" height="14"><path d="M.6.6h14.800v12.800H.600zM.6 3h14.800" fill="#fff" stroke="#444"/><path d="M8 4.500V11M5.500 8.500L8 11l2.500-2.500" stroke="#1e7fc2" fill="none" stroke-width="1.300"/></svg><svg class="cv"><use href="#chev"/></svg><svg class="i16"><circle cx="9.500" cy="5.500" r="4.800" fill="none" stroke="#444"/><path d="M6 9l-5 6" stroke="#444" stroke-width="1.300"/></svg><svg class="cv"><use href="#chev"/></svg>
        <svg width="16" height="15"><path d="M9 1l6 4-7 9-6-4z" fill="#fff" stroke="#a03cae" stroke-width="1.200"/><path d="M5 6l6 4-3.500 4.300L1.500 10z" fill="#cf8fd8" stroke="#a03cae"/></svg><svg class="cv"><use href="#chev"/></svg></div><div class="gl">Editing</div></div>
      <div class="g" style="width:58px"><div class="gb ideas"><svg width="24" height="30"><path d="M10 1h10l-5 9h7L5 29l4-12H2z" fill="#7cbcf0" stroke="#3f8fd2"/></svg><span>Ideas</span></div><div class="gl">Ideas</div></div>
      <div class="g" style="width:91px"><div class="gb ideas"><svg width="32" height="33"><path d="M1 3l15-2 15 2q1 20-15 29Q0 23 1 3z" fill="#ddd" stroke="#999"/><path d="M4 5l12-2 12 2q0 16-12 24Q4 21 4 5z" fill="#b3122b"/><path d="M10.500 18V9.500l5.500 4 5.500-4V18" fill="none" stroke="#fff" stroke-width="3"/></svg><span>Manual<br>Classification</span></div><div class="gl">Data Protection</div></div>
      <svg class="cap" width="10" height="7"><path d="M1 6l4-4.500L9 6" fill="none" stroke="#444" stroke-width="1.300"/></svg>
    </div>
    <div class="fx"><span class="nb">I1<svg width="8" height="5"><path d="M0 0h8L4 5z" fill="#777"/></svg></span><span class="dv">⋮</span><span class="fb"><svg width="12" height="12"><path d="M1 1l10 10M11 1L1 11" stroke="#bbb" stroke-width="1.600"/></svg><svg width="14" height="12"><path d="M1 7l4 4 8-10" fill="none" stroke="#bbb" stroke-width="2.200"/></svg><em>f<small>x</small></em></span><span class="fm">MB218<svg class="cv"><use href="#chev"/></svg></span></div>
    <div class="sheet">
      <div class="cells">
        <div class="hd"><i><svg width="12" height="12"><path d="M12 0v12H0z" fill="#b5b5b5"/></svg></i><b>A</b><b>B</b><b>C</b><b>D</b><b>E</b><b>F</b><b>G</b><b>H</b><b>I</b><b>J</b><b>K</b><b>L</b><b>M</b><b>N</b><b>O</b><b>P</b><b>Q</b></div>
        <div class="row"><i>4</i><span>insert into</span><span>'MTDRO',</span><span>rightscode</span><span>from user</span><span class="w3">where usercode = 'AAALC' ;</span><span class="ci">'MB221',</span></div>
        <div class="row"><i>5</i><span>insert into</span><span>'AJSIC',</span><span>rightscode</span><span>from user</span><span class="w3">where usercode = 'AAALC' ;</span><span class="ci">'MB222',</span></div>
        <div class="row"><i>6</i><span>insert into</span><span>'JKRAM',</span><span>rightscode</span><span>from user</span><span class="w3">where usercode = 'AAALC' ;</span><span class="ci">'MB223',</span></div>
        <div class="row"><i>7</i><span>insert into</span><span>'VLARD',</span><span>rightscode</span><span>from user</span><span class="w3">where usercode = 'AAALC' ;</span><span class="ci">'MB224',</span></div>
        <div class="row"><i>8</i><span>insert into</span><span>'CJLTR',</span><span>rightscode</span><span>from user</span><span class="w3">where usercode = 'AAALC' ;</span><span class="ci">'MB225',</span></div>
        <div class="row"><i>9</i><span>insert into</span><span>'BNLOT',</span><span>rightscode</span><span>from user</span><span class="w3">where usercode = 'AAALC' ;</span><span class="ci">'MB226',</span></div>
        <div class="row"><i>10</i><span>insert into</span><span>'JJPAL',</span><span>rightscode</span><span>from user</span><span class="w3">where usercode = 'AAALC' ;</span><span class="ci">'MB227',</span></div>
        <div class="row"><i>11</i><span class="ci">'MB228',</span></div><div class="row"><i>12</i><span class="ci">'MB229',</span></div><div class="row"><i>13</i><span class="ci">'MB230',</span></div><div class="row"><i>14</i><span class="ci">'MB231',</span></div><div class="row"><i>15</i><span class="ci">'MB232',</span></div><div class="row"><i>16</i><span class="ci">'MB233',</span></div><div class="row"><i>17</i><span class="ci">'MB234',</span></div><div class="row"><i>18</i><span class="ci">'MB235',</span></div><div class="row"><i>19</i><span class="ci">'MB236',</span></div><div class="row"><i>20</i><span class="ci">'MB237',</span></div><div class="row"><i>21</i><span class="ci">'MB238',</span></div><div class="row"><i>22</i><span class="ci">'MB239',</span></div><div class="row"><i>23</i><span class="ci">'MB240',</span></div><div class="row"><i>24</i><span class="ci">'MB241',</span></div><div class="row"><i>25</i><span class="ci">'MB242',</span></div><div class="row"><i>26</i><span class="ci">'MB243',</span></div><div class="row"><i>27</i><span class="ci">'MB244',</span></div><div class="row"><i>28</i><span class="ci">'MB245',</span></div><div class="row"><i>29</i><span class="ci">'MB246',</span></div><div class="row"><i>30</i><span class="ci">'MB247',</span></div><div class="row"><i>31</i><span class="ci">'MB248',</span></div><div class="row"><i>32</i><span class="ci">'MB249',</span></div><div class="row"><i>33</i></div>
      </div>
      <div class="vs"><i><svg width="8" height="5"><path d="M0 5l4-5 4 5z" fill="#666"/></svg></i><u></u><b></b><i><svg width="8" height="5"><path d="M0 0l4 5 4-5z" fill="#666"/></svg></i></div>
    </div>
    <div class="st3"><svg width="5" height="8"><path d="M5 0v8L0 4z" fill="#b5b5b5"/></svg><svg width="5" height="8"><path d="M0 0v8l5-4z" fill="#b5b5b5"/></svg><span class="sh">Sheet1</span><svg width="17" height="17"><circle cx="8.500" cy="8.500" r="7.700" fill="none" stroke="#777"/><path d="M8.500 4.500v8M4.500 8.500h8" stroke="#777" stroke-width="1.600"/></svg><span class="dv">⋮</span><div class="hs"><i><svg width="5" height="8"><path d="M5 0v8L0 4z" fill="#666"/></svg></i><b></b><u></u><i><svg width="5" height="8"><path d="M0 0v8l5-4z" fill="#666"/></svg></i></div></div>
    <div class="sb"><svg width="15" height="14"><path d="M.6 13V1h12.800v4M.6 3.500h12.800M3 6.500h4M3 9h3M.6 12.600h5" fill="none" stroke="#555" stroke-width="1.200"/><circle cx="10.500" cy="9.500" r="3.800" fill="none" stroke="#555"/><circle cx="10.500" cy="9.500" r="1.500" fill="#555"/></svg><span>Count: 32</span><i><svg width="14" height="13"><path d="M.6.6h12.800v11.800H.600zM.6 4.500h12.800M.6 8.500h12.800M5 .6v11.800M9.200.6v11.800" fill="none" stroke="#333" stroke-width="1.200"/></svg></i><svg width="14" height="13"><path d="M.6.6h12.800v11.800H.600zM3.500 3h7v7h-7zM5 5h4M5 7h4" fill="none" stroke="#555"/></svg><svg width="14" height="13"><path d="M.6.6h12.800v11.800H.600zM4.500.600v7h5v-7" fill="none" stroke="#555" stroke-width="1.200"/></svg><svg class="zoom" width="126" height="16"><path d="M0 8h7M112 8h8M116 4v8" stroke="#444" stroke-width="1.300"/><path d="M12 9h100" stroke="#999"/><path d="M60 2.500h4.500v11H60z" fill="#666"/></svg><span class="pc">100%</span></div>
  </div>
</section>
</main>
</body>
</html>
```
FILE: styles.css
```css
*{box-sizing:border-box}
body{margin:0;background:#fff;font-family:"Open Sans","Noto Sans",sans-serif;font-size:12px;letter-spacing:-.2px}
ul,p,h1,h2,fieldset{margin:0;padding:0;list-style:none}
svg{display:block;flex:none}
.defs{position:absolute}
.desktop{width:3840px;height:1080px;display:flex;overflow:hidden}
.screen{width:1920px;height:1080px;position:relative;display:flex;flex-direction:column;overflow:hidden;white-space:nowrap}
.i16{width:16px;height:16px}.i14{width:14px;height:14px}.i10{width:9px;height:9px;color:#444}
.flip{transform:scaleX(-1)}
.g5{color:#5f6368}.g1{color:#babcbe}

/* browser frame */
.strip{height:34px;flex:none;display:flex;align-items:center}
.aero{background:linear-gradient(180deg,transparent 50%,rgba(150,190,235,.55) 80%,#90bae8),linear-gradient(90deg,#b8cfe8 0,#86a9cf 240px,#56789f 300px,#4a6989 400px,#3f5a77 560px,#14202c 600px,#18242f 770px,#405e7c 800px,#3a4b5d 860px,#3a4959 1000px,#14202c 1050px,#14202c 1500px,#3c4c5d 1620px,#425468 1780px,#8fabc9 1850px,#bdd3ea 1920px)}
.grey{background:#dee1e6}
.tab{height:34px;background:#fff;border-radius:8px 8px 0 0;display:flex;align-items:center}
.tab .fade{width:174px;color:#45494d;margin:0 9px;letter-spacing:-.5px;-webkit-mask:linear-gradient(90deg,#000 86%,transparent)}
.t1{margin-left:8px;width:240px;padding-left:12px}
.t2{margin-left:8px;width:240px;padding-left:12px}
.newtab{width:28px;height:28px;border-radius:50%;background:#dadfe5;margin-left:8px;display:flex;align-items:center;justify-content:center}
.newtab.bare{background:none}
.caption{margin-left:auto;margin-right:3px;align-self:flex-start;height:19px;display:flex;border:1px solid #46576a;border-top:0;border-radius:0 0 5px 5px;overflow:hidden}
.caption i{width:28px;display:flex;align-items:center;justify-content:center;background:linear-gradient(#b9c6d4,#8497ac 50%,#62788f 52%,#8ba3bd);border-right:1px solid #46576a}
.caption .red{width:46px;background:linear-gradient(#e0a091,#c9533c 50%,#b02a12 52%,#d6644a);border:0}
.wc{margin:-6px 17px 0 auto;display:flex;gap:35px}
.tools{height:34px;flex:none;display:flex;align-items:center;padding-left:14px;gap:16px;background:#fff;padding-top:2px}
.pill{height:28px;border-radius:14px;background:#f1f3f4;display:flex;align-items:center;padding-left:11px;font-size:14px;margin-left:-2px}
.pill .ns{margin-left:8px;width:67px;color:#5f6368;letter-spacing:-.42px}
.pill b{width:1px;height:16px;background:#9aa0a6;margin:0 10px 0 7px}
.url{color:#5f6368;letter-spacing:-.52px}
.url em{font-style:normal;color:#202124}
.p1{width:1640px;margin-left:-1px}.p2{width:1522px;margin-left:-1px;padding-left:10px}
.tools.r{padding-left:14px}
.st,.eye{margin-left:auto}.st{margin-right:10px;color:#fff}.blue{margin:0 10px 0 16px}
.ext{display:flex;align-items:center}
.e1{gap:16px;margin-left:-2px}
.ui{width:16px;height:16px;background:#1a63ae;color:#fff;font-weight:700;font-size:11px;line-height:15px;text-align:center}
.ava{width:22px;height:22px;border-radius:50%;background:#475663;color:#fff;text-align:center;line-height:22px;font-size:12px}
.teal{background:#0097a7;margin:0 -3px}
.e1>svg:last-child{margin-left:11px}
.e2{gap:16px;margin-left:0}
.paused{width:81px;height:28px;border:1.500px solid #3b76cf;border-radius:14px;background:#eef3fc;color:#3367b5;display:flex;align-items:center;padding-left:2px;margin-left:-6px;gap:9px;letter-spacing:-.4px}
.mdots{width:28px;height:28px;border-radius:50%;background:#dedfe0;display:flex;align-items:center;justify-content:center;margin-left:-11px}
.marks{height:35px;flex:none;display:grid;align-items:center;border-bottom:1px solid #d5d8dc;color:#3f4347;background:#fff;letter-spacing:-.3px}
.m1{grid-template-columns:24px 45px 22px 101px 22px 49px 22px 53px 24px 130px 24px 130px 24px 132px 22px 940px 13px 22px 93px;padding-left:14px}
.m1 u{width:1px;height:16px;background:#ccc}.m1 .tight{letter-spacing:-.65px}
.m2{grid-template-columns:23px 1140px 20px 24px 66px 24px 93px 24px 130px 24px 30px;padding-left:15px}

/* CRM page */
.page{height:884px;flex:none;border:1px solid #336699;border-bottom-width:2px;padding:2px;display:flex;flex-direction:column}
.bar{height:34px;flex:none;border:1px solid #336699;background:linear-gradient(#8db9dc,#82b1d8);display:flex;position:relative;isolation:isolate}
.wave{position:absolute;left:0;top:0;width:100%;height:32px}
.tabs{display:flex;padding:4px 0 0 4px;gap:2px;position:relative;z-index:1}
.tabs li{height:28px;line-height:28px;text-align:center;font-weight:700;font-size:12.500px;color:#6a9cc8;background:#a0c5e3;letter-spacing:-.1px}
.tabs .on{background:linear-gradient(#f4f9fe,#dfeefa);color:#2d6499}
.tabs .cur{background:#fdfefe;color:#e0690c;height:29px}
.crm .tabs li:nth-child(1){width:114px;letter-spacing:-.5px}.crm .tabs li:nth-child(2){width:64px}.crm .tabs li:nth-child(3){width:169px}.crm .tabs li:nth-child(4){width:129px}.crm .tabs li:nth-child(5){width:149px}.crm .tabs li:nth-child(6){width:120px;letter-spacing:-.3px}.crm .tabs li:nth-child(7){width:52px}
.logout{z-index:1;margin:3px 6px 0 auto;height:26px;width:290px;background:#336699;color:#fff;font-weight:700;font-size:11px;line-height:26px;text-align:center;text-decoration:underline;letter-spacing:-.25px}
.content{margin-top:1px;flex:1;background:linear-gradient(#3d6da3,#97b0ce 34px,#fdfefe 66px);padding:34px 11px 0;display:flex;gap:4px}
.content:before{content:"";position:absolute;left:13px;top:175px;width:1893px;height:2px;background:#336699}
aside{width:186px;display:flex;flex-direction:column;gap:4px;padding-top:3px}
.box{border:1px solid #336699;border-top:0;background:linear-gradient(90deg,#dadada,#f9f9f9 70px)}
.box h2{background:linear-gradient(90deg,#142f72,#336699 70px);color:#fff;font-size:11px;font-weight:700;display:flex;align-items:center;padding-left:4px;letter-spacing:-.3px}
.menu{height:504px}.menu h2{height:24px}
.menu ul{padding-top:5px;font-size:11px;color:#41699a;letter-spacing:-.33px}
.menu li{height:24px;display:flex;align-items:center;gap:8px;padding-left:16px}
.menu li svg{width:9px;height:9px}
.menu .s{padding-left:33px}.menu .two{height:38px;line-height:15px}
.find{height:111px}.find h2{height:34px;line-height:15px;white-space:normal;padding-right:40px}
.find label{display:block;height:19px;line-height:24px;padding-left:4px;font-size:11px;letter-spacing:-.33px}
.find .inp{margin:0 4px}
.find button{width:100px;margin:3px 0 0 42px;display:block}
.inp{height:25px;border:1px solid #767676;border-radius:2px;background:#fff;flex:1}
.inp.l{height:23px;border-color:#b4b4b4;border-radius:0}
.find .inp{flex:none}
button{height:25px;border:1px solid #767676;border-radius:3px;background:#efefef;font:13.330px "Liberation Sans",sans-serif;padding:0 7px;letter-spacing:0;color:#000}
.search{flex:1;margin-top:3px;height:296px;padding:0 6px;font-size:11px;letter-spacing:-.35px}
.search h2{height:32px;margin:0 -6px 12px;justify-content:space-between;padding-right:10px}
fieldset{border:2px groove #c8c8c8;height:60px;margin-bottom:2.500px;padding:0 12px}
legend{padding:0 6px;margin-left:-3px;height:14px}
.chk{display:block;width:13px;height:13px;border:1px solid #767676;border-radius:2px;background:#fff}
.chk.on{background:#0075ff;border:0}
.pink{background:linear-gradient(#f4d7d7,#f4d7d7) no-repeat 0 0}
.f1{display:grid;grid-template-columns:84px 1fr;align-items:center;margin-top:9px}
.f3{display:grid;grid-template-columns:84px 449px 29px 110px 449px 23px 66px 450px;align-items:center;margin-top:9px}
.f3 span:nth-of-type(2){grid-column:4}.f3 span:nth-of-type(3){grid-column:7}
.addr{height:90px;margin-bottom:3px}.addr .f1{margin-top:8px}
.btns{display:flex;gap:5px}

/* second CRM page */
.erp .tabs{padding-left:3px}.erp .tabs li{width:113px;text-align:left;padding-left:12px}
.head{height:42px;flex:none;margin:0 17px 0 20px;border-bottom:1px solid #ccc}
.erp h1{font:300 19px "Open Sans",sans-serif;color:#444;line-height:44px}
.save{height:35px;flex:none;border-bottom:1px solid #ccc;margin:0 17px 0 20px;padding:12px 0 0 14px}
.labels{margin:49px 0 0 26px;color:#7a7a7a;font-size:12px;letter-spacing:-.4px}
.labels li{height:29px;line-height:29px}.labels .w{margin-top:34px}.labels .x{margin-top:71px}
.note{margin:18px 0 0 24px;width:60px;height:33px;border:1px solid #ccc;flex:none}

/* footers */
.foot{height:53px;flex:none;display:flex;position:relative;padding:1px 2px;background:#fff;color:#3b3a80}
.conv{width:114px;margin-left:-4px;padding-top:17px;color:#444}
.conv strong{display:block;font:700 16px/16px Lato,sans-serif;letter-spacing:2px}
.conv small{display:block;font:700 6.500px/9px Lato,sans-serif;letter-spacing:1.700px;color:#777}
.foot p{font:10px/53px "Open Sans",sans-serif;letter-spacing:-.18px}
.v{width:1154px;padding-left:303px}.foot .c{width:300px;letter-spacing:-.08px}
.sunt{margin-left:auto;width:74px;padding-top:7px}
.sunt svg{margin-left:11px}
.sunt span{display:block;font:700 19px/15px "Open Sans",sans-serif;letter-spacing:-.7px;color:#111;text-align:center}
.sunt em{font-style:normal;color:#f7941d}

/* taskbars */
.task{height:40px;flex:none;display:flex}
.seven{background:linear-gradient(#6b7077 0,#2b333d 2px,#0c1117 50%,#06090d);padding-left:0}
.cell{width:58px;margin-right:3.900px;height:38px;margin-top:1px;display:flex;align-items:center;justify-content:center;flex:none}
.cell:first-child{margin-left:-2px}
.bx{border:1px solid #7b8088;border-radius:3px;background:linear-gradient(135deg,#5d6166,#2b3036 50%,#1b2026)}
.st2{box-shadow:inset -3px 0 #15191e,inset -4px 0 #777}
.st2 svg{margin-right:4px}
.act{background:linear-gradient(135deg,#d6d6d6,#8b8c8c 60%,#6d6f70)}
.uib{width:33px;height:33px;background:#0067df;color:#fff;font:700 18px/32px "Open Sans",sans-serif;text-align:center}
.dk{background:#0048a0}
.ibas{width:36px;height:32px;border-radius:4px;background:linear-gradient(100deg,#2d8a2d,#2e9e3c 45%,#f4f8f0 50%,#2f9a36 80%);color:#fff;font:700 14px/32px "Open Sans",sans-serif;margin-right:4px;text-align:center;letter-spacing:-1px}
.tray{margin-left:auto;display:flex;align-items:center;gap:8px;color:#fff}
.clock{line-height:18px;text-align:center;font-size:12px;letter-spacing:-.4px}
.tray .clock{margin:0 3px 0 8px;line-height:19px}
.peek{width:14px;height:38px;border:1px solid #565d66;background:linear-gradient(135deg,#4a4f56,#1a1f25)}
.ten{background:#000}
.tc{width:48px;margin-right:.9px;display:flex;align-items:center;justify-content:center;position:relative}
.tc.gap{margin-right:3px}
.run:after{content:"";position:absolute;left:4px;right:4px;bottom:0;height:2px;background:#76b9ed}
.full{background:#333}.full:after{left:0;right:0}
.uis{width:24px;height:24px;background:#0048a0;color:#fff;font:700 15px/23px "Open Sans",sans-serif;text-align:center}
.or{background:#fa4616}
.tray2{margin-left:auto;display:flex;align-items:center;color:#fff;gap:8px;margin-right:24px}
.tray2 .clock{margin:0 9px 0 1px}

/* overlays of the remote session */
.rdp{position:absolute;left:1182px;top:0;width:576px;height:27px;display:grid;grid-template-columns:29px 187px 235px 24px 22px 20px;align-items:center;padding:0 0 3px 30px;color:#fff}
.rdp .rbg{position:absolute;left:0;top:0}
.rdp>*{position:relative}
.rdp span{letter-spacing:-.55px}
.pin{width:22px;height:20px;border:1px solid #26374c;border-radius:3px;display:flex;align-items:center;justify-content:center;background:#3f6ba5}
.wh{color:#fff}
.bubble{position:absolute;left:1599px;top:67px;width:320px;height:130px;background:#fff;border-radius:2px;box-shadow:0 1px 4px rgba(0,0,0,.5);padding:10px 16px;color:#202124}
.bh{display:flex;justify-content:space-between;font-size:15px;line-height:36px;letter-spacing:-.4px;margin-right:-5px}
.bubble p{font-size:12px;line-height:20px;letter-spacing:-.25px}
.bb{display:flex;justify-content:flex-end;gap:8px;margin-top:16px}
.bb button{height:32px;width:140px;background:#fff;border:1px solid #dadce0;border-radius:4px;color:#1a62d6;font:12px "Open Sans",sans-serif;letter-spacing:-.2px;white-space:nowrap}
.bb .pri{width:73px;background:#1a73e8;color:#fff;border:0;font-weight:600}
.mark{position:absolute;left:1599px;top:944px;color:#bdbdbd;font-size:20px;line-height:28px;letter-spacing:-.5px}
.mark small{display:block;font-size:14px;line-height:18px;letter-spacing:.05px}

/* Excel */
.excel{position:absolute;z-index:2;left:47px;top:59px;width:1130px;height:867px;border:1px solid #7e7e7e;background:#e6e6e6;display:flex;flex-direction:column;color:#444}
.cv{width:7px;height:5px}
.xt{height:34px;flex:none;background:#217346;color:#a7d0b7;display:grid;grid-template-columns:57px 52px 37px 37px 35px 169px 390px 108px 46px 49px 46px 46px 20px;align-items:center;padding-left:23px}
.tog{width:38px;height:16px;border:1.500px solid #e8f2ec;border-radius:8px;color:#fff;font-style:normal;font-size:11px;display:flex;align-items:center;gap:6px;padding-left:3px}
.tog b{width:8px;height:8px;border-radius:50%;background:#fff}
.xm{height:31px;flex:none;background:#f3f2f1;display:grid;grid-template-columns:51px 64px 64px 101px 82px 56px 68px 55px 89px 73px 55px 68px 28px 137px 76px 32px;align-items:center;padding-left:17px;font-size:13px;letter-spacing:-.25px}
.xm>span{line-height:24px}
.home{font-weight:700;letter-spacing:-.5px;width:38px;box-shadow:0 2px #217346}
.share,.cmt{background:#fff;border:1px solid #e1dfdd;border-radius:2px;height:24px;display:flex;align-items:center;color:#217346}
.share{width:68px;gap:5px;padding-left:7px;font-weight:700;letter-spacing:-.5px}.cmt{justify-content:center}
.ribbon{height:95px;flex:none;background:#f3f2f1;border-bottom:1px solid #cfcdcb;display:flex;padding-top:2px}
.g{height:89px;border-right:1px solid #c3c1bf;display:flex;flex-direction:column}
.gb{height:76px}
.gl{height:14px;line-height:14px;text-align:center;font-size:11.500px;position:relative;letter-spacing:-.25px}
.la{position:absolute;right:4px;top:3px;width:9px;height:9px}
.clip{display:flex;padding:4px 0 0 15px;gap:10px}
.paste{display:flex;flex-direction:column;align-items:center;color:#a5a3a1;height:62px;width:28px}
.paste span{line-height:20px}.paste .cv{margin-top:3px}
.col3{display:flex;flex-direction:column;gap:7px}.col3 svg:first-child{margin-left:2px}
.font{padding:8px 0 0 8px}
.fr1{display:flex;gap:1px}
.combo{height:23px;border:1px solid #c0bebc;background:#fff;display:flex;align-items:center;justify-content:space-between;padding:0 3px 0 2px;color:#333}
.big{font-size:16px;line-height:22px;margin-left:4px;display:flex}.big svg{margin-top:4px}.sm{font-size:14px}
.fr2{display:grid;grid-template-columns:22px 20px 23px 12px 8px 26px 12px 10px 24px 18px 22px 10px;align-items:center;padding-left:7px;margin-top:9px;height:22px;font-size:14px}
.fr2 em{font-family:"Liberation Serif",serif;font-size:16px}
.fr2 s,.align s{width:1px;height:20px;background:#cfcdcb}
.fa{border-bottom:4px solid #f00;width:16px;text-align:center;line-height:15px}
.align{display:grid;grid-template-columns:20px 20px 26px 24px 12px;grid-template-rows:23px 24px 23px;padding-left:13px;gap:0 2px;align-items:center;margin-bottom:0}
.sel{width:22px;height:23px;background:#c8c6c4;display:flex;align-items:center;justify-content:center;margin-left:-4px}
.ab{font-size:11px;line-height:9px}.ab svg{display:inline-block}
.align s{margin-left:6px}
.ori{display:flex;font-size:10px;margin-left:-14px}.ori svg{margin-left:-5px}
.num{padding-left:8px}
.n2{display:grid;grid-template-columns:20px 15px 24px 10px;align-items:center;font-size:17px;line-height:26px;padding-left:5px}
.n2 strong{font-size:26px;line-height:8px;margin-top:-12px}
.n3{display:flex;gap:7px;font-size:10px;line-height:8px;padding:4px 0 0 3px}.n3 i{color:#1e7fc2;font-style:normal}
.list{padding:0 0 0 11px}
.list div{height:23px;display:flex;align-items:center;gap:4px}.list .i16{margin-right:-1px}.sp{margin-left:6px}
.edit{display:grid;grid-template-columns:21px 17px 21px 10px;grid-template-rows:23px 23px 23px;align-items:center;padding-left:12px}
.ideas{display:flex;flex-direction:column;align-items:center;padding-top:2px}
.ideas span{text-align:center;line-height:16px;margin-top:4px}
.cap{margin:82px 9px 0 auto}
.fx{height:47px;flex:none;display:flex;padding:11px 6px 0 5px;font-size:13px}
.nb,.fb,.fm{height:26px;background:#fdfdfd;border:1px solid #c6c6c6;display:flex;align-items:center;justify-content:space-between;padding:0 6px}
.nb{width:102px}.dv{width:30px;text-align:center;line-height:24px;color:#888}
.fb{width:110px;padding:0 12px}.fb em{font:italic 700 15px "Liberation Serif",serif}.fb small{font-size:11px}
.fm{margin-left:3px;flex:1;padding-left:11px}
.sheet{height:609px;flex:none;display:flex;border-bottom:1px solid #9b9b9b}
.cells{width:1107px;height:608px;overflow:hidden;border-right:1px solid #9b9b9b;background:
 linear-gradient(90deg,transparent 89px,#d4d4d4 89px 90px,transparent 90px),
 repeating-linear-gradient(90deg,transparent 0 63px,#d4d4d4 63px 64px) 87px 0/1020px 100% no-repeat,#fff}
.hd{display:grid;grid-template-columns:26px 64px 61px repeat(14,64px) 60px;height:20px;background:#e6e6e6;border-bottom:1px solid #9b9b9b;font:14px/20px "Open Sans",sans-serif}
.hd b{font-weight:400;font-size:13px;text-align:center;border-right:1px solid #b5b5b5;color:#333}
.hd i{padding:5px 0 0 9px;border-right:1px solid #b5b5b5}
.row{display:grid;grid-template-columns:26px 64px 61px repeat(14,64px) 60px;height:20px;border-bottom:1px solid #d4d4d4;font:14px/20px Lato,sans-serif;color:#000;letter-spacing:-.1px}
.row i{font-style:normal;background:#e6e6e6;border-right:1px solid #9b9b9b;box-shadow:0 1px #b5b5b5;text-align:center;color:#222}
.row span{overflow:hidden;padding-left:3px;border-right:1px solid #d4d4d4;height:19px}
.row span:nth-of-type(2){letter-spacing:-.5px}
.row .w3{grid-column:span 3;background:#fff;letter-spacing:-.13px}
.row .ci{grid-column:10;letter-spacing:-.45px}
.vs{margin-left:3px;width:16px;padding-top:2px;display:flex;flex-direction:column}
.vs i,.vs b,.hs i,.hs b{border:1px solid #ababab;background:#fff;display:flex;align-items:center;justify-content:center}
.vs i{height:15px}.vs u{height:55px;background:#dadada}.vs b{flex:1}
.st3{height:28px;flex:none;display:flex;align-items:center;border-bottom:1px solid #c6c6c6}
.st3>svg:nth-child(1){margin-left:26px}.st3>svg:nth-child(2){margin-left:25px}
.sh{margin:-1px 33px 0 39px;align-self:flex-start;width:65px;height:25px;background:#fff;border:solid #9b9b9b;border-width:0 1px 0;box-shadow:inset 0 -2px #217346;color:#217346;font-weight:700;text-align:center;line-height:25px;font-size:13px;letter-spacing:-.5px}
.st3 .dv{margin-left:448px}
.hs{width:413px;height:15px;display:flex}
.hs i{width:15px}.hs b{flex:1}.hs u{width:24px;background:#dadada}
.sb{flex:1;background:#f3f2f1;display:flex;align-items:center;padding-left:8px}
.sb>span{margin-left:725px;width:69px}
.sb i{width:40px;height:21px;background:#c8c6c4;display:flex;align-items:center;justify-content:center}
.sb i+svg{margin:0 27px 0 13px}
.zoom{margin-left:18px}
.sb .pc{margin-left:12px;width:30px;letter-spacing:-.4px}
```
